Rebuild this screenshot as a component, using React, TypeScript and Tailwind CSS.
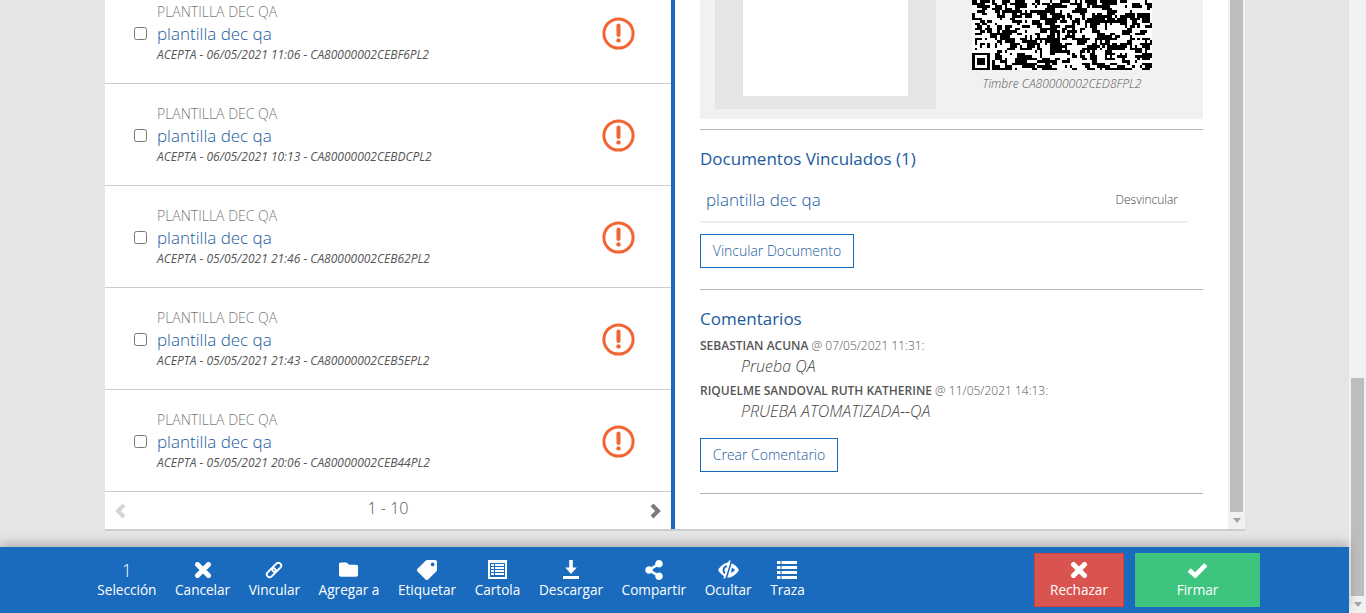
import React from 'react';
import { FaFolder, FaShareAlt, FaTag } from 'react-icons/fa';

const rows = [
    'ACEPTA - 06/05/2021 11:06 - CA80000002CEBF6PL2',
    'ACEPTA - 06/05/2021 10:13 - CA80000002CEBDCPL2',
    'ACEPTA - 05/05/2021 21:46 - CA80000002CEB62PL2',
    'ACEPTA - 05/05/2021 21:43 - CA80000002CEB5EPL2',
    'ACEPTA - 05/05/2021 20:06 - CA80000002CEB44PL2',
];

const BLUE = '#1a6bbd';

const CrossIcon: React.FC = () => (
    <svg width={18} height={16} viewBox="0 0 18 16">
        <path d="M3.5 2.5l11 11M14.5 2.5l-11 11" stroke="#fff" strokeWidth={5} strokeLinecap="round" />
    </svg>
);

const CheckIcon: React.FC = () => (
    <svg width={21} height={16} viewBox="0 0 21 16" fill="none">
        <path d="M2.2 8l6 5.5L18.8 2.6" stroke="#fff" strokeWidth={4.6} />
    </svg>
);

const LinkIcon: React.FC = () => (
    <svg width={18} height={18} viewBox="0 0 19 19" fill="none">
        <g transform="rotate(-45 9.5 9.5)" stroke="#fff" strokeWidth={2}>
            <rect x={0} y={6.5} width={11} height={6} rx={3} />
            <rect x={8} y={6.5} width={11} height={6} rx={3} />
        </g>
    </svg>
);

const SheetIcon: React.FC = () => (
    <svg width={19} height={19} viewBox="0 0 19 19">
        <rect width={19} height={19} fill="#fff" />
        <rect x={2} y={3} width={15} height={14} fill={BLUE} />
        {[4, 7, 10, 13].map((y) => (
            <g key={y} fill="#fff">
                <rect x={3} y={y} width={3} height={2} />
                <rect x={7} y={y} width={9} height={2} />
            </g>
        ))}
    </svg>
);

const DownloadIcon: React.FC = () => (
    <svg width={16} height={19} viewBox="0 0 16 19" fill="#fff">
        <path d="M6.2 0h3.6v7.5h4L8 14 2.2 7.5h4z" />
        <rect y={16} width={16} height={3} />
    </svg>
);

const EyeIcon: React.FC = () => (
    <svg width={21} height={20} viewBox="0 0 21 20">
        <path d="M0 10C3.5 4.5 7.5 2.5 10.5 2.5S17.5 4.5 21 10C17.5 15.5 13.5 17.5 10.5 17.5S3.5 15.5 0 10z" fill="#fff" />
        <path d="M14 7.5C15.2 8.2 16.2 9 17 10 16.2 11 14.8 12.2 13 12.8z" fill={BLUE} />
        <path d="M9.5 6.5A3.6 3.6 0 0 0 8 13.5" stroke={BLUE} strokeWidth={1.8} fill="none" />
        <path d="M13.6 1L8 19" stroke={BLUE} strokeWidth={1.6} />
        <path d="M11.8 0.6L6.2 18.6" stroke="#fff" strokeWidth={1.6} />
    </svg>
);

const ListIcon: React.FC = () => (
    <svg width={20} height={18} viewBox="0 0 20 18" fill="#fff">
        {[0, 5, 10, 15].map((y) => (
            <g key={y}>
                <rect y={y} width={3.5} height={3} />
                <rect x={4.5} y={y} width={15.5} height={3} />
            </g>
        ))}
    </svg>
);

const actions = [
    { label: 'Cancelar', icon: <CrossIcon /> },
    { label: 'Vincular', icon: <LinkIcon /> },
    { label: 'Agregar a', icon: <FaFolder size={19} /> },
    { label: 'Etiquetar', icon: <FaTag size={20} className="-scale-x-100" /> },
    { label: 'Cartola', icon: <SheetIcon /> },
    { label: 'Descargar', icon: <DownloadIcon /> },
    { label: 'Compartir', icon: <FaShareAlt size={20} /> },
    { label: 'Ocultar', icon: <EyeIcon /> },
    { label: 'Traza', icon: <ListIcon /> },
];

// not a readable code, only the look of the stamp
const QrCode: React.FC = () => {
    const size = 72;
    const visible = 28;
    const cells: React.ReactElement[] = [];
    const grid: boolean[][] = [];
    let seed = 20210507;
    const next = () => {
        seed = (seed * 1103515245 + 12345) & 0x7fffffff;
        return (seed >> 12) % 100;
    };
    for (let y = 0; y < visible; y++) {
        grid[y] = [];
        for (let x = 0; x < size; x++) {
            const pick = next();
            let on = next() < 52;
            // modules tend to clump together
            if (pick < 30 && x > 0) on = grid[y][x - 1];
            else if (pick < 50 && y > 0) on = grid[y - 1][x];
            grid[y][x] = on;
            const inFinder = x < 8 && y >= visible - 8;
            if (on && !inFinder) {
                cells.push(<rect key={`${x}-${y}`} x={x} y={y} width={1.02} height={1.02} />);
            }
        }
    }
    return (
        <svg width={180} height={70} viewBox={`0 0 ${size} ${visible}`} shapeRendering="crispEdges" className="block">
            <rect width={size} height={visible} fill="#fff" />
            <g fill="#000">{cells}</g>
            <rect x={0} y={visible - 7} width={7} height={7} fill="#000" />
            <rect x={1} y={visible - 6} width={5} height={5} fill="#fff" />
            <rect x={2} y={visible - 5} width={3} height={3} fill="#000" />
        </svg>
    );
};

const AlertIcon: React.FC = () => (
    <svg width={33} height={33} viewBox="0 0 33 33" fill="none" className="mt-[2px]">
        <circle cx={16.5} cy={16.5} r={14.6} stroke="#f26532" strokeWidth={3} />
        <path d="M16.5 8.5v9.5" stroke="#f26532" strokeWidth={4} strokeLinecap="round" />
        <circle cx={16.5} cy={23.4} r={2.2} fill="#f26532" />
    </svg>
);

const Chevron: React.FC<{ points: string; color: string }> = ({ points, color }) => (
    <svg width={13} height={16} viewBox="0 0 13 16" fill="none">
        <polyline points={points} stroke={color} strokeWidth={4} />
    </svg>
);

const App: React.FC = () => {
    return (
        <div className="flex h-screen overflow-hidden bg-[#e5e5e5] font-['Open_Sans',sans-serif]">
            <div className="flex min-w-0 flex-1 flex-col">
                <main className="flex min-h-0 flex-1 flex-col justify-end overflow-hidden pb-[18px] pl-[105px] pr-[104px]">
                    <div className="flex shrink-0 items-stretch bg-white shadow-[0_2px_0_#cccccc]">
                        <section className="flex w-[570px] shrink-0 flex-col justify-end border-r-4 border-[#1a6bbd]">
                            {rows.map((meta) => (
                                <div key={meta} className="flex h-[102px] items-center border-b border-[#cccccc] pl-[29px] pr-[36px]">
                                    <input type="checkbox" className="m-0 mt-[2px] h-[13px] w-[13px]" />
                                    <div className="ml-[10px] min-w-0 flex-1 pb-[1px]">
                                        <div className="text-[14px] leading-[20px] font-light text-[#777777]">PLANTILLA DEC QA</div>
                                        <div className="text-[17px] leading-[24px] font-light text-[#1a5a9e]">plantilla dec qa</div>
                                        <div className="text-[12px] leading-[17px] text-[#555555] italic">{meta}</div>
                                    </div>
                                    <AlertIcon />
                                </div>
                            ))}
                            <div className="flex h-[37px] items-center justify-between pl-[9px] pr-[9px]">
                                <Chevron points="10,2 4,8 10,14" color="#d4d4d4" />
                                <span className="pb-[6px] text-[16px] font-light text-[#555555]">1 - 10</span>
                                <Chevron points="3,2 9,8 3,14" color="#7a7a7a" />
                            </div>
                        </section>

                        <section className="flex min-w-0 flex-1 flex-col justify-end px-[25px] pb-[35px]">
                            <div className="flex h-[119px] justify-between overflow-hidden bg-[#f1f1f1] pl-[15px] pr-[51px]">
                                <div className="flex h-[109px] w-[221px] items-start justify-center bg-[#e5e5e5]">
                                    <div className="h-[96px] w-[165px] bg-white" />
                                </div>
                                <div className="flex flex-col items-center">
                                    <QrCode />
                                    <div className="mt-[5px] text-[12px] leading-[17px] font-light text-[#555555] italic">Timbre CA80000002CED8FPL2</div>
                                </div>
                            </div>

                            <div className="mt-[10px] border-t border-[#b3b3b3] pt-[18px]">
                                <h3 className="text-[17px] leading-[22px] font-normal text-[#1a5a9e]">Documentos Vinculados (1)</h3>
                                <div className="mt-[9px] flex h-[44px] w-[488px] items-center justify-between border-b-2 border-[#eeeeee] pl-[6px] pr-[10px]">
                                    <span className="text-[17px] font-light text-[#1a5a9e]">plantilla dec qa</span>
                                    <span className="text-[12px] font-light text-[#444444]">Desvincular</span>
                                </div>
                                <button className="mt-[11px] block h-[34px] w-[154px] border border-[#1a6bbd] pb-[2px] text-[14px] font-light text-[#1a5a9e]">
                                    Vincular Documento
                                </button>
                            </div>

                            <div className="mt-[21px] border-t border-[#b3b3b3] pt-[18px]">
                                <h3 className="text-[17px] leading-[22px] font-normal text-[#1a5a9e]">Comentarios</h3>
                                <div className="mt-[8px] text-[12px] leading-[16px] font-light text-[#555555]">
                                    <span className="font-semibold text-[#555555]">SEBASTIAN ACUNA</span> @ 07/05/2021 11:31:
                                </div>
                                <div className="pl-[41px] text-[16px] leading-[24px] font-light text-[#444444] italic">Prueba QA</div>
                                <div className="mt-[5px] text-[12px] leading-[16px] font-light text-[#555555]">
                                    <span className="font-semibold text-[#555555]">RIQUELME SANDOVAL RUTH KATHERINE</span> @ 11/05/2021 14:13:
                                </div>
                                <div className="pl-[41px] text-[16px] leading-[24px] font-light text-[#444444] italic">PRUEBA ATOMATIZADA--QA</div>
                                <button className="mt-[15px] block h-[34px] w-[138px] border border-[#1a6bbd] pb-[2px] text-[14px] font-light text-[#1a5a9e]">
                                    Crear Comentario
                                </button>
                            </div>

                            <div className="mt-[21px] border-t border-[#b3b3b3]" />
                        </section>

                        <div className="flex w-[17px] shrink-0 flex-col bg-[#f1f1f1]">
                            <div className="mx-[2px] flex-1 bg-[#bdbdbd]" />
                            <div className="flex h-[17px] items-center justify-center">
                                <span className="h-0 w-0 border-x-[4px] border-t-[5px] border-x-transparent border-t-[#a3a3a3]" />
                            </div>
                        </div>
                    </div>
                </main>

                <footer className="relative flex h-[66px] shrink-0 items-center justify-between bg-[#1a6bbd] pl-[88px] pr-[89px] text-white shadow-[0_-4px_10px_rgba(0,0,0,0.22)]">
                    <div className="flex">
                        <div className="flex flex-col items-center px-[9.3px] pb-[3px]">
                            <span className="flex h-[24px] items-end text-[18px] leading-[24px] font-light">1</span>
                            <span className="mt-[-2px] text-[13.6px] leading-[20px]">Selección</span>
                        </div>
                        {actions.map((a) => (
                            <div key={a.label} className="flex flex-col items-center px-[9.3px] pb-[3px]">
                                <span className="flex h-[24px] items-center">{a.icon}</span>
                                <span className="mt-[-2px] text-[13.6px] leading-[20px]">{a.label}</span>
                            </div>
                        ))}
                    </div>
                    <div className="flex gap-[11px]">
                        <button className="flex h-[54px] w-[90px] flex-col items-center justify-center border border-[#d43f3a] bg-[#d9534f] pt-[2px]">
                            <CrossIcon />
                            <span className="mt-[2px] text-[13.6px] leading-[20px]">Rechazar</span>
                        </button>
                        <button className="flex h-[54px] w-[125px] flex-col items-center justify-center bg-[#3dc47e] pt-[2px]">
                            <CheckIcon />
                            <span className="mt-[2px] text-[13.6px] leading-[20px]">Firmar</span>
                        </button>
                    </div>
                </footer>
            </div>

            <div className="flex w-[17px] shrink-0 flex-col justify-end bg-[#f1f1f1]">
                <div className="mx-[2px] h-[218px] bg-[#bdbdbd]" />
                <div className="flex h-[17px] items-center justify-center">
                    <span className="h-0 w-0 border-x-[4px] border-t-[5px] border-x-transparent border-t-[#a3a3a3]" />
                </div>
            </div>
        </div>
    );
};

export default App;
